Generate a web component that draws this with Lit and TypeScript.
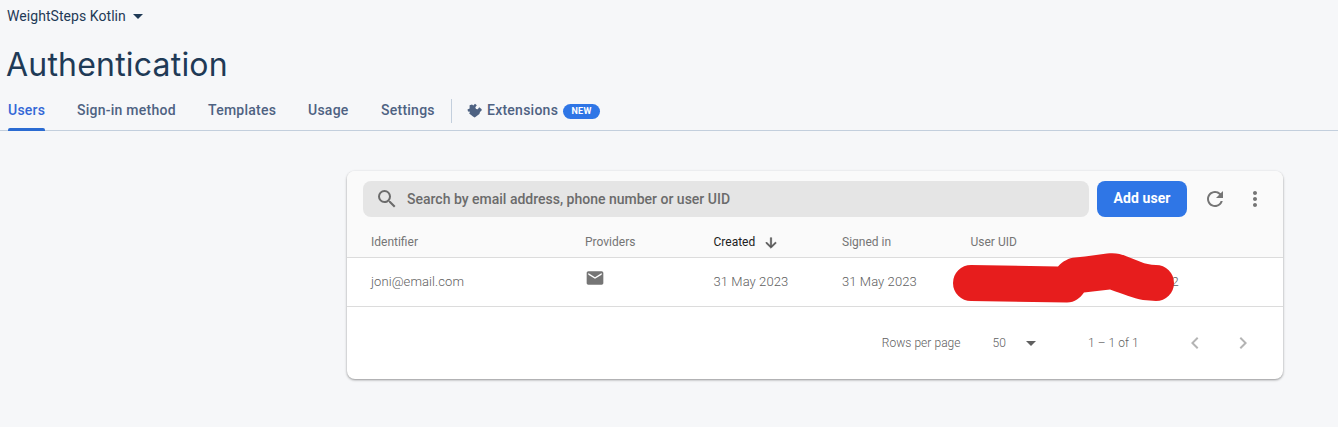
import { LitElement, html, css, svg } from "lit";
import { customElement } from "lit/decorators.js";

const icon = (d: string, size = 24) =>
  html`<svg width=${size} height=${size} viewBox="0 0 24 24" fill="currentColor">${svg`<path d=${d} />`}</svg>`;

const ICONS = {
  drop: "M7 10l5 5 5-5z",
  search:
    "M15.5 14h-.79l-.28-.27A6.471 6.471 0 0 0 16 9.5 6.5 6.5 0 1 0 9.5 16c1.61 0 3.09-.59 4.23-1.57l.27.28v.79l5 4.99L20.49 19l-4.99-5zm-6 0C7.01 14 5 11.99 5 9.5S7.01 5 9.5 5 14 7.01 14 9.5 11.99 14 9.5 14z",
  refresh:
    "M17.65 6.35A7.958 7.958 0 0 0 12 4c-4.42 0-7.99 3.58-7.99 8s3.57 8 7.99 8c3.73 0 6.84-2.55 7.73-6h-2.08A5.99 5.99 0 0 1 12 18c-3.31 0-6-2.69-6-6s2.69-6 6-6c1.66 0 3.14.69 4.22 1.78L13 11h7V4l-2.35 2.35z",
  more: "M12 8c1.1 0 2-.9 2-2s-.9-2-2-2-2 .9-2 2 .9 2 2 2zm0 2c-1.1 0-2 .9-2 2s.9 2 2 2 2-.9 2-2-.9-2-2-2zm0 6c-1.1 0-2 .9-2 2s.9 2 2 2 2-.9 2-2-.9-2-2-2z",
  mail: "M20 4H4c-1.1 0-1.99.9-1.99 2L2 18c0 1.1.9 2 2 2h16c1.1 0 2-.9 2-2V6c0-1.1-.9-2-2-2zm0 4l-8 5-8-5V6l8 5 8-5v2z",
  down: "M20 12l-1.41-1.41L13 16.17V4h-2v12.17l-5.58-5.59L4 12l8 8 8-8z",
  left: "M15.41 7.41L14 6l-6 6 6 6 1.41-1.41L10.83 12z",
  right: "M10 6L8.59 7.41 13.17 12l-4.58 4.59L10 18l6-6z",
};

@customElement("app-root")
export class AppRoot extends LitElement {
  static styles = css`
    :host {
      display: block;
      height: 427px;
      overflow: hidden;
      background: #f6f7f9;
      font-family: Roboto, sans-serif;
      color: #757575;
    }
    * { box-sizing: border-box; }
    svg { display: block; flex: none; }
    .project {
      display: flex;
      align-items: center;
      height: 32px;
      padding-left: 7px;
      font-size: 14px;
      letter-spacing: 0.06px;
      color: #1f3a56;
    }
    .project .name { width: 119px; white-space: nowrap; }
    h1 {
      margin: 0;
      height: 59px;
      padding: 13px 0 0 6px;
      font: 400 32px/40px Inter, sans-serif;
      letter-spacing: 0.2px;
      color: #1f3a56;
    }
    nav {
      display: flex;
      height: 40px;
      padding-left: 8px;
      border-bottom: 1px solid #c3cfdd;
      font-size: 14px;
      font-weight: 500;
      line-height: 38px;
      letter-spacing: 0.25px;
      color: #4e6282;
      white-space: nowrap;
    }
    .tab { margin-right: 32px; height: 40px; }
    .tab.active { display: flex; flex-direction: column; color: #3367d6; }
    .tab.active::after {
      content: "";
      height: 3px;
      margin-top: -1px;
      border-radius: 2px 2px 0 0;
      background: #2a6bd2;
    }
    .w37 { width: 37px; }
    .w99 { width: 99px; }
    .w68 { width: 68px; }
    .w41 { width: 41px; }
    .w54 { width: 54px; margin-right: 16px; }
    .divider { width: 1px; height: 24px; margin: 8px 15px 0 0; background: #c3cfdd; }
    .ext { display: flex; align-items: center; height: 38px; }
    .ext .label { width: 71px; margin: 0 5px; }
    .badge {
      width: 37px;
      height: 15px;
      margin-top: 2px;
      border-radius: 8px;
      background: #2f76e6;
      color: #fff;
      font-size: 9px;
      font-weight: 700;
      line-height: 15px;
      text-align: center;
    }
    .card {
      width: 936px;
      height: 208px;
      margin: 40px 0 0 347px;
      border-radius: 8px;
      background: #fff;
      box-shadow: 0 1px 3px rgba(0, 0, 0, 0.24), 0 1px 2px rgba(0, 0, 0, 0.2);
    }
    .top {
      height: 87px;
      border-radius: 8px 8px 0 0;
      border-bottom: 1px solid #dcdcdc;
      background: #fafafa;
    }
    .bar { display: flex; align-items: center; height: 56px; padding-left: 16px; }
    .search {
      display: flex;
      align-items: center;
      width: 726px;
      height: 36px;
      padding-left: 12px;
      border-radius: 8px;
      background: #e5e5e5;
      font-size: 14px;
      font-weight: 500;
      color: #6b6b6b;
    }
    .search span { margin-left: 8px; }
    .add {
      width: 90px;
      height: 36px;
      margin: 0 16px 0 8px;
      padding: 0;
      border: 0;
      border-radius: 8px;
      background: #2f76e6;
      color: #fff;
      font: 700 14px/34px Roboto, sans-serif;
      letter-spacing: 0.1px;
    }
    .add span { display: block; height: 36px; }
    .bar > svg + svg { margin-left: 16px; }
    .cols {
      display: grid;
      grid-template-columns: 214px 128.5px 128.5px 128.5px 1fr;
      padding-left: 24px;
    }
    .head { height: 30px; line-height: 30px; font-size: 12px; }
    .head .sorted { display: flex; align-items: center; color: #212121; }
    .sorted svg { margin: 1px 0 0 8px; color: #555; stroke: #555; stroke-width: 0.8; }
    .row { height: 49px; border-bottom: 1px solid #dcdcdc; font-size: 13px; font-weight: 300; line-height: 48px; letter-spacing: 0.08px; color: #606060; position: relative; }
    .row .mail { padding-top: 10px; color: #757575; }
    .uid { padding-left: 201px; }
    .scribble { position: absolute; left: 606px; top: -6px; }
    .pager {
      display: flex;
      align-items: center;
      justify-content: flex-end;
      height: 72px;
      padding-right: 28px;
      font-size: 12px;
      font-weight: 300;
      letter-spacing: 0.05px;
      color: #606060;
    }
    .pager .size { margin: 0 13px 0 32px; }
    .pager .range { width: 51px; margin: 0 44px 0 45px; white-space: nowrap; }
    .pager .arrow { color: #b4b4b4; }
    .pager .next { margin-left: 24px; }
  `;

  render() {
    return html`
      <div class="project"><span class="name">WeightSteps Kotlin</span>${icon(ICONS.drop)}</div>
      <h1>Authentication</h1>
      <nav>
        <div class="tab active w37">Users</div>
        <div class="tab w99">Sign-in method</div>
        <div class="tab w68">Templates</div>
        <div class="tab w41">Usage</div>
        <div class="tab w54">Settings</div>
        <div class="divider"></div>
        <div class="ext">
          <svg width="15" height="15" viewBox="0 0 15 15" fill="#4e6282">
            <path d="M2.6 2.2L5 1.4 6.3 2.4 8 .8 9.8 2.2 8.3 4.3 9 6 10.8 6.3 12.2 4.3 14.7 6.2 14.6 7.6 13 9 12.4 11 7.7 14.6 6 13.6 2.2 10.6 3 8.8 1 8.6.5 6.5 2.6 5.5Z" />
          </svg>
          <span class="label">Extensions</span><span class="badge">NEW</span>
        </div>
      </nav>
      <section class="card">
        <div class="top">
          <div class="bar">
            <div class="search">${icon(ICONS.search)}<span>Search by email address, phone number or user UID</span></div>
            <button class="add"><span>Add user</span></button>
            ${icon(ICONS.refresh)}${icon(ICONS.more)}
          </div>
          <div class="cols head">
            <span>Identifier</span><span>Providers</span>
            <span class="sorted">Created ${icon(ICONS.down, 16)}</span>
            <span>Signed in</span><span>User UID</span>
          </div>
        </div>
        <div class="cols row">
          <span>joni@email.com</span>
          <span class="mail">${icon(ICONS.mail, 20)}</span>
          <span>31 May 2023</span><span>31 May 2023</span>
          <span class="uid">2</span>
          <svg class="scribble" width="222" height="52" viewBox="0 0 222 52" fill="#e71d1d">
            <path d="M18 13L105 14.5C110 9 116 6 122 5.5L132 4.5 154 1.5C163 .5 168 2 174 4.5L188 10Q194 12.5 203 13A18 18 0 0 1 203 49L190 48C180 46 170 42 157 37.5L131 40.5C127 46 122 50.5 114 50.5L18 49A18 18 0 0 1 18 13Z" />
          </svg>
        </div>
        <div class="pager">
          <span>Rows per page</span><span class="size">50</span>${icon(ICONS.drop)}
          <span class="range">1 – 1 of 1</span>
          <span class="arrow">${icon(ICONS.left)}</span>
          <span class="arrow next">${icon(ICONS.right)}</span>
        </div>
      </section>
    `;
  }
}
